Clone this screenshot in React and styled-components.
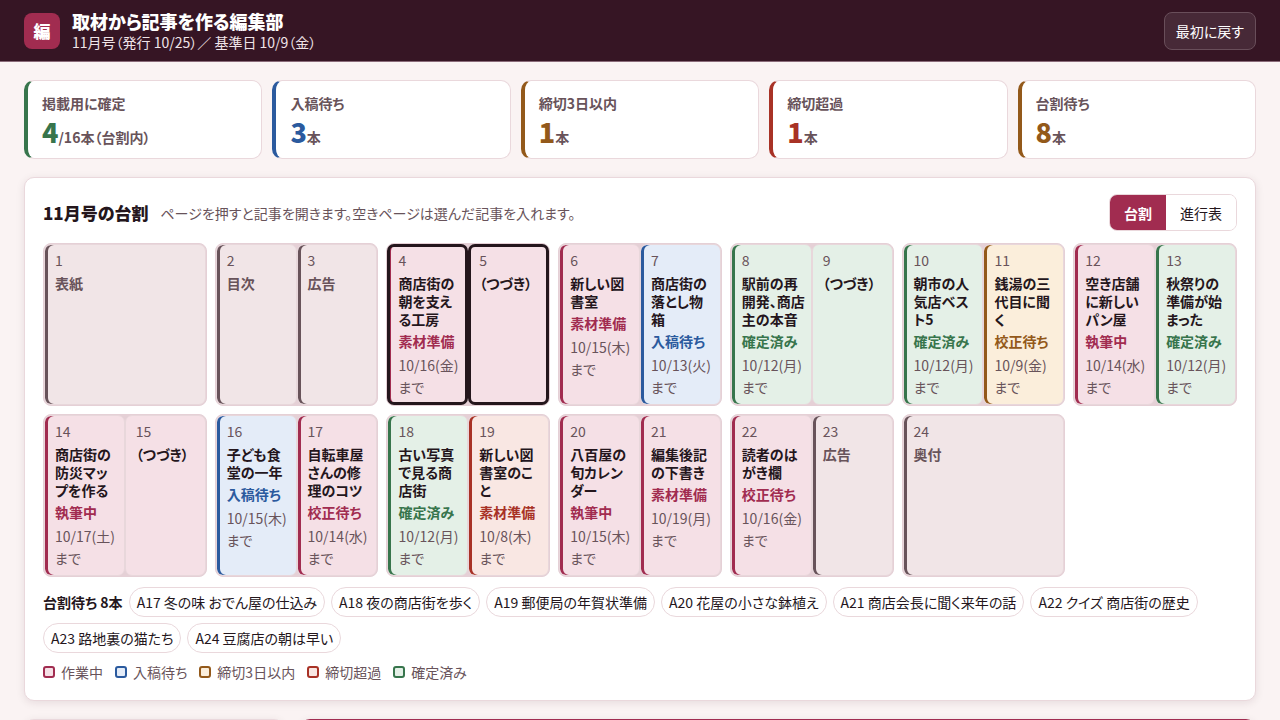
import { useState } from "react";
import styled, { createGlobalStyle, css } from "styled-components";

const GlobalStyle = createGlobalStyle`
  * {
    box-sizing: border-box;
  }
  body {
    margin: 0;
    background: #faf3f3;
    color: #24161c;
    font-family: "Noto Sans CJK JP", sans-serif;
    font-feature-settings: "palt";
    font-size: 14px;
    line-height: 22px;
  }
  button {
    font: inherit;
    font-feature-settings: inherit;
    color: inherit;
    cursor: pointer;
  }
  h1, h2, p, dl, dt, dd, ul {
    margin: 0;
    padding: 0;
  }
`;

const tones = {
  work: { main: "#a12c50", soft: "#f5e0e6" },
  wait: { main: "#2b5a9e", soft: "#e4ecf8" },
  soon: { main: "#93591a", soft: "#fbeedb" },
  late: { main: "#a83226", soft: "#f9e7e3" },
  done: { main: "#37754c", soft: "#e4f0e7" },
  fixed: { main: "#68535a", soft: "#f1e5e7" },
};

const Header = styled.header`
  display: flex;
  align-items: center;
  gap: 12px;
  padding: 10px 24px;
  background: #361524;
  color: #fff;
  border-bottom: 1px solid #8a6b79;
`;

const Logo = styled.span`
  display: grid;
  place-items: center;
  width: 36px;
  height: 36px;
  border-radius: 8px;
  background: #a12c50;
  font-size: 17px;
  font-weight: 900;
`;

const HeaderText = styled.div`
  flex: 1;
`;

const AppTitle = styled.h1`
  font-size: 18px;
  line-height: 23px;
  font-weight: 800;
`;

const Issue = styled.p`
  font-size: 14px;
  line-height: 18px;
  color: #f0e4e8;
`;

const ResetButton = styled.button`
  height: 38px;
  padding: 0 11px;
  border: 1px solid #694e5a;
  border-radius: 8px;
  background: #472937;
`;

const Main = styled.main`
  display: flex;
  flex-direction: column;
  gap: 18px;
  padding: 18px 24px;
`;

const Stats = styled.dl`
  display: grid;
  grid-template-columns: repeat(5, 1fr);
  gap: 10px;
`;

const Stat = styled.div`
  padding: 11px 14px 8px;
  border: 1px solid #ead8dc;
  border-left: 4px solid ${(props) => tones[props.$tone].main};
  border-radius: 10px;
  background: #fff;

  dt {
    color: #68535a;
    font-weight: 600;
  }
  dd {
    color: #68535a;
    font-weight: 600;
  }
  strong {
    color: ${(props) => tones[props.$tone].main};
    font-size: 27px;
    font-weight: 800;
    line-height: 36px;
  }
`;

const Panel = styled.section`
  padding: 16px 18px 17px;
  border: 1px solid #ead8dc;
  border-radius: 10px;
  background: #fff;
  box-shadow: 0 2px 8px rgba(54, 21, 36, 0.1);
`;

const PanelHead = styled.div`
  display: flex;
  align-items: center;
  gap: 12px;
  margin-bottom: 12px;

  h2 {
    font-size: 17px;
    font-weight: 800;
  }
  p {
    flex: 1;
    color: #68535a;
  }
`;

const Switch = styled.div`
  display: flex;
  border: 1px solid #ead8dc;
  border-radius: 8px;
  overflow: hidden;
`;

const SwitchButton = styled.button`
  height: 35px;
  padding: 0 14px;
  border: 0;
  background: #fff;

  ${(props) =>
    props.$active &&
    css`
      background: #a12c50;
      color: #fff;
      font-weight: 700;
    `}
`;

const Spreads = styled.div`
  display: grid;
  grid-template-columns: repeat(7, 1fr);
  gap: 8px;
`;

const Spread = styled.div`
  display: grid;
  grid-auto-flow: column;
  grid-auto-columns: 1fr;
  min-height: 163px;
  border: 1px solid #e5d0d6;
  border-radius: 8px;
  background: #e5d0d6;
`;

const Page = styled.button`
  display: flex;
  flex-direction: column;
  gap: 3px;
  min-width: 0;
  padding: 5px 4px 4px 10px;
  border: 1px solid #e8d7db;
  border-radius: 7px;
  background: ${(props) => tones[props.$tone].soft};
  box-shadow: ${(props) =>
    props.$cont ? "none" : `inset 3px 0 0 ${tones[props.$tone].main}`};
  text-align: left;

  ${(props) =>
    props.$selected &&
    css`
      outline: 3px solid #24161c;
      outline-offset: -3px;
    `}
`;

const PageNumber = styled.span`
  color: #68535a;
  line-height: 21px;
`;

const PageTitle = styled.span`
  color: ${(props) => (props.$tone === "fixed" ? "#68535a" : "inherit")};
  font-weight: 700;
  line-height: 18px;
`;

const PageState = styled.span`
  color: ${(props) => tones[props.$tone].main};
  font-weight: 700;
  line-height: 20px;
`;

const PageDue = styled.span`
  color: #68535a;
`;

const Waiting = styled.div`
  display: flex;
  flex-wrap: wrap;
  align-items: center;
  gap: 6px;
  margin-top: 10px;
`;

const Chip = styled.button`
  height: 30px;
  padding: 0 7px;
  border: 1px solid #ead8dc;
  border-radius: 15px;
  background: #fff;
`;

const Legend = styled.ul`
  display: flex;
  flex-wrap: wrap;
  gap: 12px;
  margin-top: 8px;
  color: #68535a;
  list-style: none;

  li {
    display: flex;
    align-items: center;
    gap: 6px;
  }
`;

const Swatch = styled.i`
  width: 12px;
  height: 12px;
  border: 2px solid ${(props) => tones[props.$tone].main};
  border-radius: 3px;
  background: ${(props) => tones[props.$tone].soft};
`;

const Lower = styled.div`
  display: grid;
  grid-template-columns: 260px 1fr;
  gap: 16px;
`;

const LowerPanel = styled(Panel)`
  min-height: 120px;
  border-top: ${(props) => (props.$accent ? "4px solid #a12c50" : "1px solid #ead8dc")};
`;

const stats = [
  { label: "掲載用に確定", value: 4, unit: "/16本（台割内）", tone: "done" },
  { label: "入稿待ち", value: 3, unit: "本", tone: "wait" },
  { label: "締切3日以内", value: 1, unit: "本", tone: "soon" },
  { label: "締切超過", value: 1, unit: "本", tone: "late" },
  { label: "台割待ち", value: 8, unit: "本", tone: "soon" },
];

const spreads = [
  [{ no: 1, title: "表紙", tone: "fixed" }],
  [
    { no: 2, title: "目次", tone: "fixed" },
    { no: 3, title: "広告", tone: "fixed" },
  ],
  [
    { no: 4, article: "A1", title: "商店街の朝を支える工房", state: "素材準備", due: "10/16(金)", tone: "work" },
    { no: 5, article: "A1", title: "（つづき）", tone: "work", cont: true },
  ],
  [
    { no: 6, title: "新しい図書室", state: "素材準備", due: "10/15(木)", tone: "work" },
    { no: 7, title: "商店街の落とし物箱", state: "入稿待ち", due: "10/13(火)", tone: "wait" },
  ],
  [
    { no: 8, title: "駅前の再開発、商店主の本音", state: "確定済み", due: "10/12(月)", tone: "done" },
    { no: 9, title: "（つづき）", tone: "done", cont: true },
  ],
  [
    { no: 10, title: "朝市の人気店ベスト5", state: "確定済み", due: "10/12(月)", tone: "done" },
    { no: 11, title: "銭湯の三代目に聞く", state: "校正待ち", due: "10/9(金)", tone: "soon" },
  ],
  [
    { no: 12, title: "空き店舗に新しいパン屋", state: "執筆中", due: "10/14(水)", tone: "work" },
    { no: 13, title: "秋祭りの準備が始まった", state: "確定済み", due: "10/12(月)", tone: "done" },
  ],
  [
    { no: 14, title: "商店街の防災マップを作る", state: "執筆中", due: "10/17(土)", tone: "work" },
    { no: 15, title: "（つづき）", tone: "work", cont: true },
  ],
  [
    { no: 16, title: "子ども食堂の一年", state: "入稿待ち", due: "10/15(木)", tone: "wait" },
    { no: 17, title: "自転車屋さんの修理のコツ", state: "校正待ち", due: "10/14(水)", tone: "work" },
  ],
  [
    { no: 18, title: "古い写真で見る商店街", state: "確定済み", due: "10/12(月)", tone: "done" },
    { no: 19, title: "新しい図書室のこと", state: "素材準備", due: "10/8(木)", tone: "late" },
  ],
  [
    { no: 20, title: "八百屋の旬カレンダー", state: "執筆中", due: "10/15(木)", tone: "work" },
    { no: 21, title: "編集後記の下書き", state: "素材準備", due: "10/19(月)", tone: "work" },
  ],
  [
    { no: 22, title: "読者のはがき欄", state: "校正待ち", due: "10/16(金)", tone: "work" },
    { no: 23, title: "広告", tone: "fixed" },
  ],
  [{ no: 24, title: "奥付", tone: "fixed" }],
];

const waiting = [
  "A17 冬の味 おでん屋の仕込み",
  "A18 夜の商店街を歩く",
  "A19 郵便局の年賀状準備",
  "A20 花屋の小さな鉢植え",
  "A21 商店会長に聞く来年の話",
  "A22 クイズ 商店街の歴史",
  "A23 路地裏の猫たち",
  "A24 豆腐店の朝は早い",
];

const legend = [
  { label: "作業中", tone: "work" },
  { label: "入稿待ち", tone: "wait" },
  { label: "締切3日以内", tone: "soon" },
  { label: "締切超過", tone: "late" },
  { label: "確定済み", tone: "done" },
];

const App = () => {
  const [view, setView] = useState("台割");
  const [selected, setSelected] = useState("A1");

  const reset = () => {
    setView("台割");
    setSelected("A1");
  };

  return (
    <>
      <GlobalStyle />
      <Header>
        <Logo>編</Logo>
        <HeaderText>
          <AppTitle>取材から記事を作る編集部</AppTitle>
          <Issue>11月号（発行 10/25）／ 基準日 10/9（金）</Issue>
        </HeaderText>
        <ResetButton onClick={reset}>最初に戻す</ResetButton>
      </Header>
      <Main>
        <Stats>
          {stats.map((s) => (
            <Stat key={s.label} $tone={s.tone}>
              <dt>{s.label}</dt>
              <dd>
                <strong>{s.value}</strong>
                {s.unit}
              </dd>
            </Stat>
          ))}
        </Stats>
        <Panel>
          <PanelHead>
            <h2>11月号の台割</h2>
            <p>ページを押すと記事を開きます。空きページは選んだ記事を入れます。</p>
            <Switch>
              {["台割", "進行表"].map((name) => (
                <SwitchButton
                  key={name}
                  $active={view === name}
                  aria-pressed={view === name}
                  onClick={() => setView(name)}
                >
                  {name}
                </SwitchButton>
              ))}
            </Switch>
          </PanelHead>
          <Spreads>
            {spreads.map((pages) => (
              <Spread key={pages[0].no}>
                {pages.map((p) => (
                  <Page
                    key={p.no}
                    $tone={p.tone}
                    $cont={p.cont}
                    $selected={selected === (p.article || p.no)}
                    onClick={() => setSelected(p.article || p.no)}
                  >
                    <PageNumber>{p.no}</PageNumber>
                    <PageTitle $tone={p.tone}>{p.title}</PageTitle>
                    {p.state && <PageState $tone={p.tone}>{p.state}</PageState>}
                    {p.due && <PageDue>{p.due}まで</PageDue>}
                  </Page>
                ))}
              </Spread>
            ))}
          </Spreads>
          <Waiting>
            <strong>台割待ち 8本</strong>
            {waiting.map((name) => (
              <Chip key={name}>{name}</Chip>
            ))}
          </Waiting>
          <Legend>
            {legend.map((l) => (
              <li key={l.label}>
                <Swatch $tone={l.tone} />
                {l.label}
              </li>
            ))}
          </Legend>
        </Panel>
        <Lower>
          <LowerPanel />
          <LowerPanel $accent />
        </Lower>
      </Main>
    </>
  );
};

export default App;
